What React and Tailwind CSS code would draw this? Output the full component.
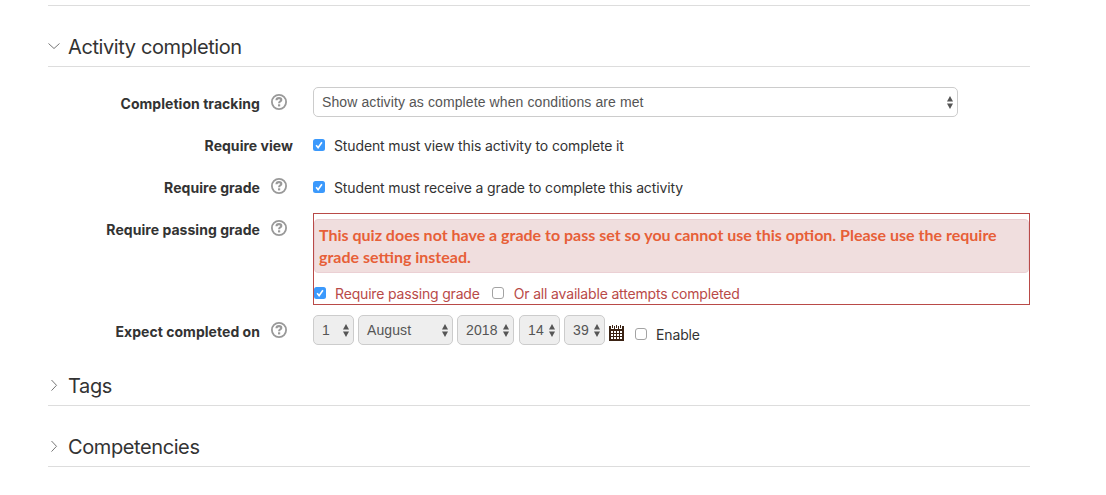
import React, { useState } from "react";

const HelpIcon = () => (
  <svg width="18" height="18" viewBox="0 0 18 18" fill="none" className="shrink-0">
    <circle cx="9" cy="9" r="7.1" stroke="#999" strokeWidth="1.8" />
    <path
      d="M6.5 7.3C6.5 5.7 7.6 5.1 9 5.1C10.5 5.1 11.3 5.9 11.3 6.9C11.3 8.3 9.1 8.3 9.1 10.3"
      stroke="#999"
      strokeWidth="2.1"
    />
    <rect x="8" y="11.3" width="2.2" height="2.1" fill="#999" />
  </svg>
);

const Arrows = () => (
  <svg width="6" height="13" viewBox="0 0 6 13" fill="#555" className="shrink-0">
    <path d="M3 0L6 5.6H0Z" />
    <path d="M3 13L6 7.4H0Z" />
  </svg>
);

const CalendarIcon = () => (
  <svg width="15" height="16" viewBox="0 0 15 16" className="shrink-0">
    <path d="M0 1H2V4H5V1H6V4H9V1H10V4H13V1H15V16H0Z" fill="#3b2314" />
    <path d="M3.5 0V3M7.5 0V3M11.5 0V3" stroke="#3b2314" strokeWidth="1" />
    <path
      d="M2 6h2v2H2zM5 6h2v2H5zM8 6h2v2H8zM11 6h2v2h-2zM2 9h2v2H2zM5 9h2v2H5zM8 9h2v2H8zM11 9h2v2h-2zM2 12h2v2H2zM5 12h2v2H5zM8 12h2v2H8zM11 12h2v2h-2z"
      fill="#fff"
    />
  </svg>
);

const Checkbox = ({ checked, onClick }) => (
  <button
    type="button"
    role="checkbox"
    aria-checked={checked}
    onClick={onClick}
    className={
      checked
        ? "w-3 h-3 shrink-0 rounded-[2.5px] bg-[#3b99fc]"
        : "w-3 h-3 shrink-0 rounded-[3px] border border-[#a3a3a3] bg-white"
    }
  >
    {checked && (
      <svg width="12" height="12" viewBox="0 0 12 12" fill="none">
        <path d="M3.1 6.3L5.1 8.6L8.9 3.2" stroke="#fff" strokeWidth="1.6" />
      </svg>
    )}
  </button>
);

const SelectBox = ({ value, className }) => (
  <div
    className={`flex h-[30px] items-center justify-between rounded-[5px] border border-[#ccc] pl-2 pr-1 font-['Liberation_Sans',sans-serif] text-sm tracking-[0.1px] text-[#555] ${className}`}
  >
    <span>{value}</span>
    <Arrows />
  </div>
);

const Label = ({ text, help }) => (
  <div className="flex h-[42px] w-[245px] shrink-0 items-center justify-end font-bold tracking-[0.04px]">
    <span className="whitespace-nowrap">{text}</span>
    {help && (
      <span className="ml-[10px] mr-[5px] -mt-1">
        <HelpIcon />
      </span>
    )}
  </div>
);

const SectionTitle = ({ title, open }) => (
  <div className="flex h-[61px] items-center border-b border-[#ddd] pt-[22px]">
    <svg width="12" height="12" viewBox="0 0 12 12" fill="none" stroke="#777" className="mr-2 -mt-[2px]">
      {open ? <path d="M0.5 3.5L6 8.5L11.5 3.5" /> : <path d="M3.5 1L8.5 6.3L3.5 11.6" />}
    </svg>
    <h2 className="text-[20px] leading-6 tracking-[-0.4px]">{title}</h2>
  </div>
);

const App = () => {
  const [view, setView] = useState(true);
  const [grade, setGrade] = useState(true);
  const [passing, setPassing] = useState(true);
  const [attempts, setAttempts] = useState(false);
  const [enable, setEnable] = useState(false);

  return (
    <div className="h-[495px] bg-white pl-12 pt-[5px] font-['Inter',sans-serif] text-sm tracking-[-0.13px] text-[#333]">
      <div className="w-[982px] border-t border-[#ddd]">
        <SectionTitle title="Activity completion" open />

        <div className="pt-4">
          <div className="flex gap-5">
            <Label text="Completion tracking" help />
            <SelectBox
              value="Show activity as complete when conditions are met"
              className="mt-1 w-[645px] bg-white"
            />
          </div>

          <div className="flex gap-5">
            <Label text="Require view" />
            <div className="flex items-center">
              <span className="flex pb-[2px]">
                <Checkbox checked={view} onClick={() => setView(!view)} />
              </span>
              <span className="ml-[9px]">Student must view this activity to complete it</span>
            </div>
          </div>

          <div className="flex gap-5">
            <Label text="Require grade" help />
            <div className="flex items-center">
              <span className="flex pb-[2px]">
                <Checkbox checked={grade} onClick={() => setGrade(!grade)} />
              </span>
              <span className="ml-[9px]">Student must receive a grade to complete this activity</span>
            </div>
          </div>

          {/* ERROR BOX */}
          <div className="flex gap-5">
            <Label text="Require passing grade" help />
            <div className="mt-1 h-[92px] w-[717px] border border-[#b94a48] pt-[5px] text-[#b94a48]">
              <div className="h-[54px] rounded-[4px] border border-[#ebd0d4] bg-[#f0dede] px-1 pt-1 font-['Lato',sans-serif] text-base font-bold leading-[22px] tracking-normal text-[#e75f38]">
                This quiz does not have a grade to pass set so you cannot use this option. Please use the
                require grade setting instead.
              </div>
              <div className="flex items-center pt-[11px] tracking-[-0.17px]">
                <span className="flex pb-[2px]">
                  <Checkbox checked={passing} onClick={() => setPassing(!passing)} />
                </span>
                <span className="ml-[9px]">Require passing grade</span>
                <span className="ml-3 flex pb-[2px]">
                  <Checkbox checked={attempts} onClick={() => setAttempts(!attempts)} />
                </span>
                <span className="ml-[10px]">Or all available attempts completed</span>
              </div>
            </div>
          </div>

          {/* DATE */}
          <div className="mt-[6px] flex h-[34px] gap-5">
            <Label text="Expect completed on" help />
            <div className="flex pt-1">
              <SelectBox value="1" className="w-[41px] bg-[#eee]" />
              <SelectBox value="August" className="ml-1 w-[95px] bg-[#eee]" />
              <SelectBox value="2018" className="ml-1 w-[57px] bg-[#eee]" />
              <SelectBox value="14" className="ml-[5px] w-[41px] bg-[#eee]" />
              <SelectBox value="39" className="ml-1 w-[41px] bg-[#eee]" />
              <div className="flex h-10 items-center">
                <span className="ml-1 -mt-1">
                  <CalendarIcon />
                </span>
                <span className="ml-[11px] flex pb-[2px]">
                  <Checkbox checked={enable} onClick={() => setEnable(!enable)} />
                </span>
                <span className="ml-[9px]">Enable</span>
              </div>
            </div>
          </div>
        </div>

        <SectionTitle title="Tags" />
        <SectionTitle title="Competencies" />
      </div>
    </div>
  );
};

export default App;
